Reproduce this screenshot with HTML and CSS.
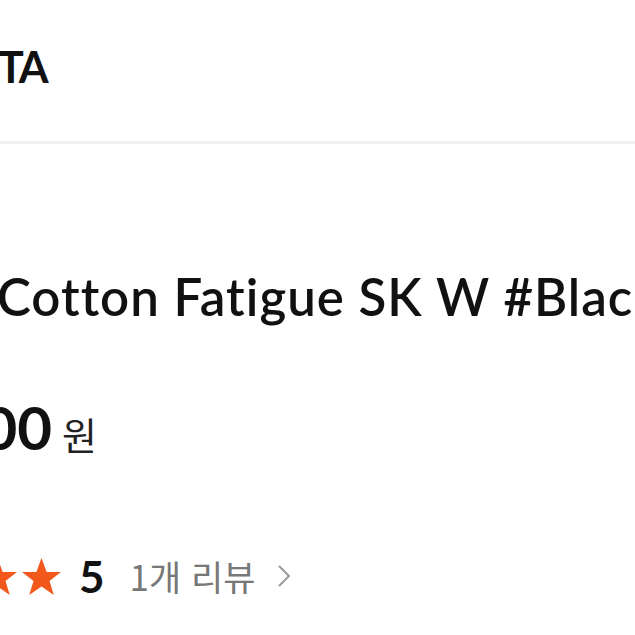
FILE: index.html
```html
<!DOCTYPE html>
<html lang="ko">
<head>
<meta charset="utf-8">
<link rel="stylesheet" href="styles.css">
</head>
<body>
<div class="page">
  <header class="brand"><span class="brand-name">TA</span></header>
  <h1 class="title">Cotton Fatigue SK W #Black</h1>
  <div class="price">
    <div class="amount-box"><span class="amount">39,000</span></div>
    <span class="won">원</span>
  </div>
  <div class="rating">
    <div class="stars">
      <svg class="star" viewBox="0 0 40 38"><polygon points="20,1 25,14.5 39,14.5 27.8,23.3 32,37 20,28.8 8,37 12.2,23.3 1,14.5 15,14.5"/></svg>
      <svg class="star" viewBox="0 0 40 38"><polygon points="20,1 25,14.5 39,14.5 27.8,23.3 32,37 20,28.8 8,37 12.2,23.3 1,14.5 15,14.5"/></svg>
      <svg class="star" viewBox="0 0 40 38"><polygon points="20,1 25,14.5 39,14.5 27.8,23.3 32,37 20,28.8 8,37 12.2,23.3 1,14.5 15,14.5"/></svg>
      <svg class="star" viewBox="0 0 40 38"><polygon points="20,1 25,14.5 39,14.5 27.8,23.3 32,37 20,28.8 8,37 12.2,23.3 1,14.5 15,14.5"/></svg>
      <svg class="star" viewBox="0 0 40 38"><polygon points="20,1 25,14.5 39,14.5 27.8,23.3 32,37 20,28.8 8,37 12.2,23.3 1,14.5 15,14.5"/></svg>
    </div>
    <span class="score">5</span>
    <span class="reviews">1개 리뷰</span>
    <svg class="chevron" viewBox="0 0 14 24"><polyline points="2,2 12,12 2,22"/></svg>
  </div>
</div>
</body>
</html>
```

FILE: styles.css
```css
html, body {
  margin: 0;
  padding: 0;
  background: #ffffff;
}
body {
  width: 635px;
  height: 635px;
  overflow: hidden;
  font-family: "Lato", "Noto Sans CJK KR", sans-serif;
  color: #111;
  font-variant-ligatures: none;
}
.page {
  display: flex;
  flex-direction: column;
}
.brand {
  box-sizing: border-box;
  height: 144px;
  padding-top: 41px;
  border-bottom: 3px solid #f1f1f1;
  margin-left: -2px;
}
.brand-name {
  font-size: 43px;
  line-height: 1.2;
  font-weight: 700;
  letter-spacing: -2px;
}
.title {
  margin: 123px 0 0 -3px;
  font-size: 51px;
  line-height: 60px;
  font-weight: 600;
  letter-spacing: 1px;
  white-space: nowrap;
  color: #111;
}
.price {
  display: flex;
  align-items: baseline;
  margin-top: 64px;
  height: 72px;
}
.amount-box {
  width: 52px;
  display: flex;
  justify-content: flex-end;
}
.amount {
  font-size: 60px;
  line-height: 72px;
  font-weight: 700;
  white-space: nowrap;
}
.won {
  font-family: "Noto Sans CJK KR", sans-serif;
  font-size: 38px;
  font-weight: 400;
  color: #222;
  margin-left: 10px;
}
.rating {
  display: flex;
  align-items: center;
  margin-top: 93px;
  height: 40px;
}
.stars {
  width: 62px;
  display: flex;
  justify-content: flex-end;
  gap: 3px;
  flex-shrink: 0;
}
.star {
  width: 41px;
  height: 39px;
  flex-shrink: 0;
  fill: #f2581b;
}
.score {
  margin-left: 17px;
  font-size: 44px;
  font-weight: 700;
  line-height: 40px;
  color: #111;
}
.reviews {
  margin-left: 25px;
  font-family: "Noto Sans CJK KR", sans-serif;
  font-size: 35px;
  font-weight: 400;
  line-height: 40px;
  color: #777;
}
.chevron {
  margin-left: 22px;
  width: 14px;
  height: 24px;
  fill: none;
  stroke: #999;
  stroke-width: 2;
}
```
